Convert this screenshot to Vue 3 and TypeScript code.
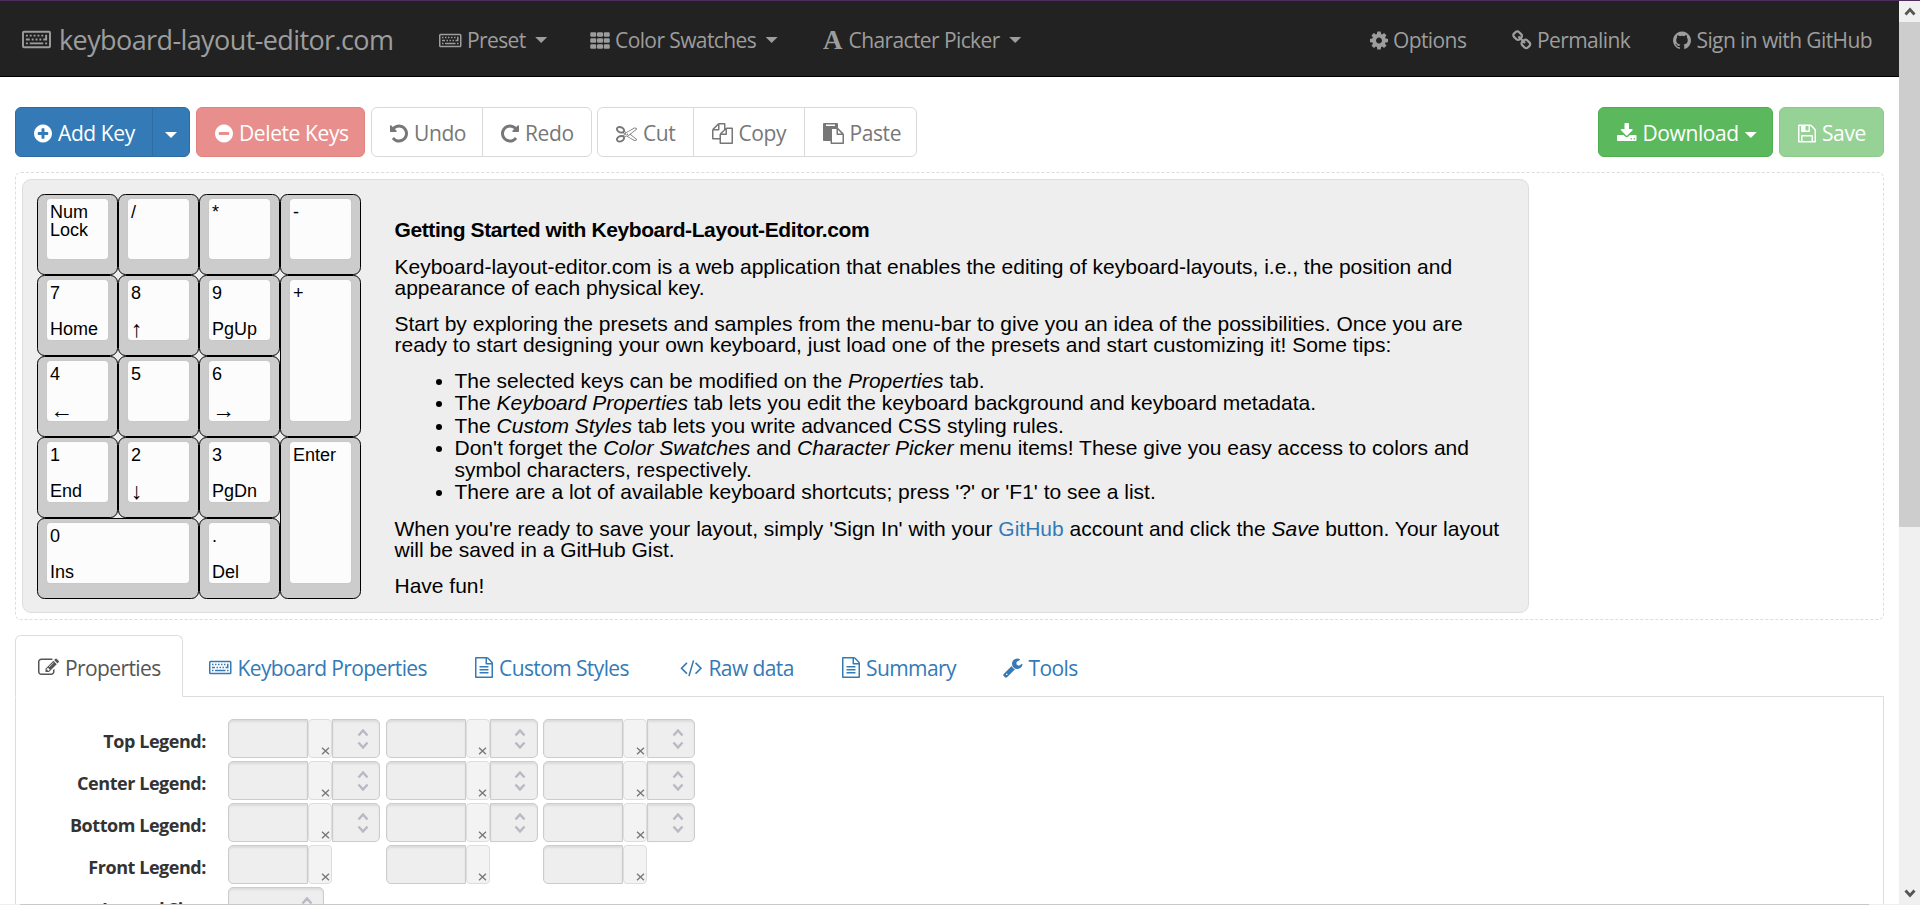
<script setup lang="ts">
import { defineComponent, h } from 'vue'

interface Glyph { box: string; w: number; d: string }

const disc = 'zm320-64q0 209-103 385.5t-279.5 279.5-385.5 103-385.5-103-279.5-279.5-103-385.5 103-385.5 279.5-279.5 385.5-103 385.5 103 279.5 279.5 103 385.5z'

const glyphs: Record<string, Glyph> = {
  plus: { box: '128 0 1536 1792', w: 18, d: 'M1344 960v-128q0-26-19-45t-45-19h-256v-256q0-26-19-45t-45-19h-128q-26 0-45 19t-19 45v256h-256q-26 0-45 19t-19 45v128q0 26 19 45t45 19h256v256q0 26 19 45t45 19h128q26 0 45-19t19-45v-256h256q26 0 45-19t19-45' + disc },
  minus: { box: '128 0 1536 1792', w: 18, d: 'M1344 960v-128q0-26-19-45t-45-19h-768q-26 0-45 19t-19 45v128q0 26 19 45t45 19h768q26 0 45-19t19-45' + disc },
  undo: { box: '128 0 1536 1792', w: 18, d: 'M1664 896q0 156-61 298t-164 245-245 164-298 61q-172 0-327-72.5t-264-204.5q-7-10-6.5-22.5t8.5-20.5l137-138q10-9 25-9 16 2 23 12 73 95 179 147t225 52q104 0 198.5-40.5t163.5-109.5 109.5-163.5 40.5-198.5-40.5-198.5-109.5-163.5-163.5-109.5-198.5-40.5q-98 0-188 35.5t-160 101.5l137 138q31 30 14 69-17 40-59 40h-448q-26 0-45-19t-19-45v-448q0-42 40-59 39-17 69 14l130 129q107-101 244.5-156.5t284.5-55.5q156 0 298 61t245 164 164 245 61 298z' },
  redo: { box: '128 0 1536 1792', w: 18, d: 'M1664 256v448q0 26-19 45t-45 19h-448q-42 0-59-40-17-39 14-69l138-138q-148-137-349-137-104 0-198.5 40.5t-163.5 109.5-109.5 163.5-40.5 198.5 40.5 198.5 109.5 163.5 163.5 109.5 198.5 40.5q119 0 225-52t179-147q7-10 23-12 15 0 25 9l137 138q9 8 9.5 20.5t-7.5 22.5q-109 132-264 204.5t-327 72.5q-156 0-298-61t-245-164-164-245-61-298 61-298 164-245 245-164 298-61q147 0 284.5 55.5t244.5 156.5l130-129q29-31 70-14 39 17 39 59z' },
  th: { box: '0 0 1664 1792', w: 20, d: 'M96 192h320q96 0 96 96v192q0 96-96 96h-320q-96 0-96-96v-192q0-96 96-96zM672 192h320q96 0 96 96v192q0 96-96 96h-320q-96 0-96-96v-192q0-96 96-96zM1248 192h320q96 0 96 96v192q0 96-96 96h-320q-96 0-96-96v-192q0-96 96-96zM96 704h320q96 0 96 96v192q0 96-96 96h-320q-96 0-96-96v-192q0-96 96-96zM672 704h320q96 0 96 96v192q0 96-96 96h-320q-96 0-96-96v-192q0-96 96-96zM1248 704h320q96 0 96 96v192q0 96-96 96h-320q-96 0-96-96v-192q0-96 96-96zM96 1216h320q96 0 96 96v192q0 96-96 96h-320q-96 0-96-96v-192q0-96 96-96zM672 1216h320q96 0 96 96v192q0 96-96 96h-320q-96 0-96-96v-192q0-96 96-96zM1248 1216h320q96 0 96 96v192q0 96-96 96h-320q-96 0-96-96v-192q0-96 96-96z' },
  cog: { box: '128 0 1536 1792', w: 18, d: 'M1152 896q0-106-75-181t-181-75-181 75-75 181 75 181 181 75 181-75 75-181zm512-109v222q0 12-8 23t-20 13l-185 28q-19 54-39 91 35 50 107 138 10 12 10 25t-9 23q-27 37-99 108t-94 71q-12 0-26-9l-138-108q-44 23-91 38-16 136-29 186-7 28-36 28h-222q-14 0-24.5-8.5t-11.5-21.5l-28-184q-49-16-90-37l-141 107q-10 9-25 9-14 0-25-11-126-114-165-168-7-10-7-23 0-12 8-23 15-21 51-66.5t54-70.5q-27-50-41-99l-183-27q-13-2-21-12.5t-8-23.5v-222q0-12 8-23t19-13l186-28q14-46 39-92-40-57-107-138-10-12-10-24 0-10 9-23 26-36 98.5-107.5t94.5-71.5q13 0 26 10l138 107q44-23 91-38 16-136 29-186 7-28 36-28h222q14 0 24.5 8.5t11.5 21.5l28 184q49 16 90 37l142-107q9-9 24-9 13 0 25 10 129 119 165 170 7 8 7 22 0 12-8 23-15 21-51 66.5t-54 70.5q26 50 41 98l183 28q13 2 21 12.5t8 23.5z' },
  link: { box: '64 0 1664 1792', w: 19.5, d: 'M1520 1216q0-40-28-68l-208-208q-28-28-68-28-42 0-72 32 3 3 19 18.5t21.5 21.5 15 19 13 25.5 3.5 27.5q0 40-28 68t-68 28q-15 0-27.5-3.5t-25.5-13-19-15-21.5-21.5-18.5-19q-33 31-33 73 0 40 28 68l206 207q27 27 68 27 40 0 68-26l147-146q28-28 28-67zm-703-705q0-40-28-68l-206-207q-28-28-68-28-39 0-68 27l-147 146q-28 28-28 67 0 40 28 68l208 208q27 27 68 27 42 0 72-31-3-3-19-18.5t-21.5-21.5-15-19-13-25.5-3.5-27.5q0-40 28-68t68-28q15 0 27.5 3.5t25.5 13 19 15 21.5 21.5 18.5 19q33-31 33-73zm895 705q0 120-85 203l-147 146q-83 83-203 83-121 0-204-85l-206-207q-83-83-83-203 0-123 88-209l-88-88q-86 88-208 88-120 0-204-84l-208-208q-84-84-84-204t85-203l147-146q83-83 203-83 121 0 204 85l206 207q83 83 83 203 0 123-88 209l88 88q86-88 208-88 120 0 204 84l208 208q84 84 84 204z' },
  github: { box: '128 0 1536 1792', w: 18, d: 'M896 128q209 0 385.5 103t279.5 279.5 103 385.5q0 251-146.5 451.5t-378.5 277.5q-27 5-40-7t-13-30q0-3 .5-76.5t.5-134.5q0-97-52-142 57-6 102.5-18t94-39 81-66.5 53-105 20.5-150.5q0-119-79-206 37-91-8-204-28-9-81 11t-92 44l-38 24q-93-26-192-26t-192 26q-16-11-42.5-27t-83.5-38.5-85-13.5q-45 113-8 204-79 87-79 206 0 85 20.5 150t52.5 105 80.5 67 94 39 102.5 18q-39 36-49 103-21 10-45 15t-57 5-65.5-21.5-55.5-62.5q-19-32-48.5-52t-49.5-24l-20-3q-21 0-29 4.5t-5 11.5 9 14 13 12l7 5q22 10 43.5 38t31.5 51l10 23q13 38 44 61.5t67 30 69.5 7 55.5-3.5l23-4q0 38 .5 88.5t.5 54.5q0 18-13 30t-40 7q-232-77-378.5-277.5t-146.5-451.5q0-209 103-385.5t279.5-279.5 385.5-103z' },
  wrench: { box: '64 0 1664 1792', w: 19.5, d: 'M448 1472q0-26-19-45t-45-19-45 19-19 45 19 45 45 19 45-19 19-45zm644-420l-682 682q-37 37-90 37-52 0-91-37l-106-108q-38-36-38-90 0-53 38-91l681-681q39 98 114.5 173.5t173.5 114.5zm634-435q0 39-23 106-47 134-164.5 217.5t-258.5 83.5q-185 0-316.5-131.5t-131.5-316.5 131.5-316.5 316.5-131.5q58 0 121.5 16.5t107.5 46.5q16 11 16 28t-16 28l-293 169v224l193 107q5-3 79-48.5t135.5-81 70.5-35.5q15 0 23.5 10t8.5 25z' },
  edit: { box: '0 0 1792 1792', w: 21, d: 'M888 1184l116-116-152-152-116 116v56h96v96h56zm440-720q-16-16-33 1l-350 350q-17 17-1 33t33-1l350-350q17-17 1-33zm80 594v190q0 119-84.5 203.5t-203.5 84.5h-832q-119 0-203.5-84.5t-84.5-203.5v-832q0-119 84.5-203.5t203.5-84.5h832q63 0 117 25 15 7 18 23 3 17-9 29l-49 49q-14 14-32 8-23-6-45-6h-832q-66 0-113 47t-47 113v832q0 66 47 113t113 47h832q66 0 113-47t47-113v-126q0-13 9-22l64-64q15-15 35-7t20 29zm-96-738l288 288-672 672h-288v-288zm444 132l-92 92-288-288 92-92q28-28 68-28t68 28l152 152q28 28 28 68t-28 68z' },
  file: { box: '128 0 1536 1792', w: 18, d: 'M1596 380q28 28 48 76t20 88v1152q0 40-28 68t-68 28h-1344q-40 0-68-28t-28-68v-1600q0-40 28-68t68-28h896q40 0 88 20t76 48zm-444-244v376h376q-10-29-22-41l-313-313q-12-12-41-22zm384 1528v-1024h-416q-40 0-68-28t-28-68v-416h-768v1536h1280zm-1024-864q0-14 9-23t23-9h704q14 0 23 9t9 23v64q0 14-9 23t-23 9h-704q-14 0-23-9t-9-23v-64zm736 224q14 0 23 9t9 23v64q0 14-9 23t-23 9h-704q-14 0-23-9t-9-23v-64q0-14 9-23t23-9h704zm0 256q14 0 23 9t9 23v64q0 14-9 23t-23 9h-704q-14 0-23-9t-9-23v-64q0-14 9-23t23-9h704z' },
  save: { box: '128 0 1536 1792', w: 18, d: 'M512 1536h768v-384h-768v384zm896 0h128v-896q0-14-10-38.5t-20-34.5l-281-281q-10-10-34-20t-39-10v416q0 40-28 68t-68 28h-576q-40 0-68-28t-28-68v-416h-128v1280h128v-416q0-40 28-68t68-28h832q40 0 68 28t28 68v416zm-384-928v-320q0-13-9.5-22.5t-22.5-9.5h-192q-13 0-22.5 9.5t-9.5 22.5v320q0 13 9.5 22.5t22.5 9.5h192q13 0 22.5-9.5t9.5-22.5zm640 32v928q0 40-28 68t-68 28h-1344q-40 0-68-28t-28-68v-1344q0-40 28-68t68-28h928q40 0 88 20t76 48l280 280q28 28 48 76t20 88z' },
  download: { box: '64 0 1664 1792', w: 19.5, d: 'M1344 1344q0-26-19-45t-45-19-45 19-19 45 19 45 45 19 45-19 19-45zm256 0q0-26-19-45t-45-19-45 19-19 45 19 45 45 19 45-19 19-45zm128-224v320q0 40-28 68t-68 28h-1472q-40 0-68-28t-28-68v-320q0-40 28-68t68-28h465l135 136q58 56 136 56t136-56l136-136h464q40 0 68 28t28 68zm-325-569q17 41-14 70l-448 448q-18 19-45 19t-45-19l-448-448q-31-29-14-70 17-39 59-39h256v-448q0-26 19-45t45-19h256q26 0 45 19t19 45v448h256q42 0 59 39z' },
  copy: { box: '0 0 1792 1792', w: 21, d: 'M1696 384q40 0 68 28t28 68v1216q0 40-28 68t-68 28h-960q-40 0-68-28t-28-68v-288h-544q-40 0-68-28t-28-68v-672q0-40 20-88t48-76l408-408q28-28 76-48t88-20h416q40 0 68 28t28 68v328q68-40 128-40h416zm-544 213l-299 299h299v-299zm-640-384l-299 299h299v-299zm196 647l316-316v-416h-384v416q0 40-28 68t-68 28h-416v640h512v-256q0-40 20-88t48-76zm956 804v-1152h-384v416q0 40-28 68t-68 28h-416v640h896z' },
  paste: { box: '0 0 1792 1792', w: 21, d: 'M768 1664h896v-640h-416q-40 0-68-28t-28-68v-416h-384v1152zm256-1440v-64q0-13-9.5-22.5t-22.5-9.5h-704q-13 0-22.5 9.5t-9.5 22.5v64q0 13 9.5 22.5t22.5 9.5h704q13 0 22.5-9.5t9.5-22.5zm256 672h299l-299-299v299zm512 128v672q0 40-28 68t-68 28h-960q-40 0-68-28t-28-68v-160h-544q-40 0-68-28t-28-68v-1344q0-40 28-68t68-28h1088q40 0 68 28t28 68v328q21 13 36 28l408 408q28 28 48 76t20 88z' },
  cut: { box: '0 0 1792 1792', w: 21, d: 'M960 896q26 0 45 19t19 45-19 45-45 19-45-19-19-45 19-45 45-19zm300 64l507 398q28 20 25 56-5 35-35 51l-128 64q-13 7-29 7-17 0-31-8l-690-387-110 66q-8 4-12 5 14 49 10 97-7 77-56 147.5t-132 123.5q-132 84-277 84-136 0-222-78-90-84-79-207 7-76 56-147t131-124q132-84 278-84 83 0 151 31 9-13 22-22l122-73-122-73q-13-9-22-22-68 31-151 31-146 0-278-84-82-53-131-124t-56-147q-5-59 15.5-113t63.5-93q85-79 222-79 145 0 277 84 83 52 132 123t56 148q4 48-10 97 4 1 12 5l110 66 690-387q14-8 31-8 16 0 29 7l128 64q30 16 35 51 3 36-25 56zm-681-260q46-42 21-108t-106-117q-92-59-192-59-74 0-113 36-46 42-21 108t106 117q92 59 192 59 74 0 113-36zm-85 745q81-51 106-117t-21-108q-39-36-113-36-100 0-192 59-81 51-106 117t21 108q39 36 113 36 100 0 192-59zm178-613l96 58v-11q0-36 33-56l14-8-79-44-26 26q-3 3-10 11t-12 12q-2 2-4 3.5t-3 2.5zm224 224l96 32 736-576-128-64-768 431v113l-160 96 9 8q2 2 7 6 4 4 11 12t11 12l26 26zm704 416l128-64-520-408-177 138q-2 3-13 7z' },
  code: { box: '64 0 1920 1792', w: 22.5, d: 'M681 1399l-50 50q-10 10-23 10t-23-10l-466-466q-10-10-10-23t10-23l466-466q10-10 23-10t23 10l50 50q10 10 10 23t-10 23l-393 393 393 393q10 10 10 23t-10 23zm591-1067l-373 1291q-4 13-15.5 19.5t-23.5 2.5l-62-17q-13-4-19.5-15.5t-2.5-24.5l373-1291q4-13 15.5-19.5t23.5-2.5l62 17q13 4 19.5 15.5t2.5 24.5zm657 651l-466 466q-10 10-23 10t-23-10l-50-50q-10-10-10-23t10-23l393-393-393-393q-10-10-10-23t10-23l50-50q10-10 23-10t23 10l466 466q10 10 10 23t-10 23z' },
  keyboard: { box: '0 -128 1920 1792', w: 22.5, d: 'M128 192h1664q128 0 128 128v896q0 128-128 128h-1664q-128 0-128-128v-896q0-128 128-128zM128 320v896h1664v-896zM256 960h128v128h-128zM512 960h896v128h-896zM1536 960h128v128h-128zM256 704h256v128h-256zM640 704h128v128h-128zM896 704h128v128h-128zM1152 704h128v128h-128zM256 448h128v128h-128zM512 448h128v128h-128zM768 448h128v128h-128zM1024 448h128v128h-128zM1280 448h128v128h-128zM1536 448h128v384h-256v-128h128z' },
}

const Icon = defineComponent({
  props: { name: { type: String, required: true } },
  setup(p) {
    return () => {
      const g = glyphs[p.name]
      return h('svg', { class: 'fa', viewBox: g.box, width: g.w, height: 21, preserveAspectRatio: 'xMidYMid meet', fill: 'currentColor', 'fill-rule': 'evenodd' }, [h('path', { d: g.d })])
    }
  },
})

interface Key { id: string; top: string; bottom?: string; arrow?: boolean }
const keys: Key[] = [
  { id: 'numlock', top: 'Num Lock' }, { id: 'div', top: '/' }, { id: 'mul', top: '*' }, { id: 'sub', top: '-' },
  { id: 'k7', top: '7', bottom: 'Home' }, { id: 'k8', top: '8', bottom: '↑', arrow: true }, { id: 'k9', top: '9', bottom: 'PgUp' }, { id: 'tall', top: '+' },
  { id: 'k4', top: '4', bottom: '←', arrow: true }, { id: 'k5', top: '5' }, { id: 'k6', top: '6', bottom: '→', arrow: true },
  { id: 'k1', top: '1', bottom: 'End' }, { id: 'k2', top: '2', bottom: '↓', arrow: true }, { id: 'k3', top: '3', bottom: 'PgDn' }, { id: 'tall', top: 'Enter' },
  { id: 'wide', top: '0', bottom: 'Ins' }, { id: 'dot', top: '.', bottom: 'Del' },
]

const tabs = [
  { icon: 'edit', label: 'Properties' },
  { icon: 'keyboard', label: 'Keyboard Properties' },
  { icon: 'file', label: 'Custom Styles' },
  { icon: 'code', label: 'Raw data' },
  { icon: 'file', label: 'Summary' },
  { icon: 'wrench', label: 'Tools' },
]

const rows = [
  { label: 'Top Legend:', sized: true },
  { label: 'Center Legend:', sized: true },
  { label: 'Bottom Legend:', sized: true },
  { label: 'Front Legend:', sized: false },
]
</script>

<template>
  <div class="window">
    <div class="page">
      <nav class="navbar">
        <a class="brand"><Icon name="keyboard" /><span>keyboard-layout-editor.com</span></a>
        <a class="link"><Icon name="keyboard" /><span>Preset</span><i class="caret" /></a>
        <a class="link"><Icon name="th" /><span>Color Swatches</span><i class="caret" /></a>
        <a class="link"><b class="serif-a">A</b><span>Character Picker</span><i class="caret" /></a>
        <a class="link"><Icon name="cog" /><span>Options</span></a>
        <a class="link"><Icon name="link" /><span>Permalink</span></a>
        <a class="link"><Icon name="github" /><span>Sign in with GitHub</span></a>
      </nav>

      <div class="toolbar">
        <div class="group add">
          <button class="btn primary"><Icon name="plus" /><span>Add Key</span></button>
          <button class="btn primary"><i class="caret" /></button>
        </div>
        <button class="btn danger"><Icon name="minus" /><span>Delete Keys</span></button>
        <div class="group history">
          <button class="btn plain"><Icon name="undo" /><span>Undo</span></button>
          <button class="btn plain"><Icon name="redo" /><span>Redo</span></button>
        </div>
        <div class="group clip">
          <button class="btn plain"><Icon name="cut" /><span>Cut</span></button>
          <button class="btn plain"><Icon name="copy" /><span>Copy</span></button>
          <button class="btn plain"><Icon name="paste" /><span>Paste</span></button>
        </div>
        <button class="btn success download"><Icon name="download" /><span>Download</span><i class="caret" /></button>
        <button class="btn success save"><Icon name="save" /><span>Save</span></button>
      </div>

      <div class="canvas">
        <div class="board">
          <div class="keys">
            <div v-for="(k, i) in keys" :key="i" class="key" :class="k.id">
              <div class="cap"><span>{{ k.top }}</span><span v-if="k.bottom" class="low" :class="{ arrowkey: k.arrow }">{{ k.bottom }}</span></div>
            </div>
          </div>
          <div class="intro">
            <h4>Getting Started with Keyboard-Layout-Editor.com</h4>
            <p>Keyboard-layout-editor.com is a web application that enables the editing of keyboard-layouts, i.e., the position and<br>appearance of each physical key.</p>
            <p>Start by exploring the presets and samples from the menu-bar to give you an idea of the possibilities. Once you are<br>ready to start designing your own keyboard, just load one of the presets and start customizing it! Some tips:</p>
            <ul>
              <li>The selected keys can be modified on the <i>Properties</i> tab.</li>
              <li>The <i>Keyboard Properties</i> tab lets you edit the keyboard background and keyboard metadata.</li>
              <li>The <i>Custom Styles</i> tab lets you write advanced CSS styling rules.</li>
              <li>Don't forget the <i>Color Swatches</i> and <i>Character Picker</i> menu items! These give you easy access to colors and<br>symbol characters, respectively.</li>
              <li>There are a lot of available keyboard shortcuts; press '?' or 'F1' to see a list.</li>
            </ul>
            <p>When you're ready to save your layout, simply 'Sign In' with your <a>GitHub</a> account and click the <i>Save</i> button. Your layout<br>will be saved in a GitHub Gist.</p>
            <p>Have fun!</p>
          </div>
        </div>
      </div>

      <div class="tabs">
        <a v-for="(t, i) in tabs" :key="t.label" class="tab" :class="{ active: i === 0 }"><Icon :name="t.icon" /><span>{{ t.label }}</span></a>
      </div>
      <div class="panel">
        <div v-for="r in rows" :key="r.label" class="row">
          <label>{{ r.label }}</label>
          <div v-for="n in 3" :key="n" class="cell">
            <div class="field" />
            <div class="clear"><svg width="9" height="8" viewBox="0 0 9 8"><path d="M1 .7l7 6.6M8 .7l-7 6.6" /></svg></div>
            <div v-if="r.sized" class="field number"><svg width="12" height="20" viewBox="0 0 12 20"><path d="M1.5 6.5l4.5-5 4.5 5M1.5 13.5l4.5 5 4.5-5" /></svg></div>
          </div>
        </div>
        <div class="row">
          <label>Legend Size:</label>
          <div class="field number alone"><svg width="12" height="20" viewBox="0 0 12 20"><path d="M1.5 6.5l4.5-5 4.5 5M1.5 13.5l4.5 5 4.5-5" /></svg></div>
        </div>
      </div>
    </div>
    <div class="scrollbar">
      <svg class="arrow" viewBox="0 0 12 9"><path d="M1.5 7.5l4.5-5 4.5 5" /></svg>
      <div class="thumb" />
      <svg class="arrow" viewBox="0 0 12 9"><path d="M1.5 1.5l4.5 5 4.5-5" /></svg>
    </div>
    <div class="edge" />
  </div>
</template>

<style>
html, body { overflow: hidden; background: #fff; }
</style>

<style scoped>
.window { position: relative; box-sizing: border-box; display: flex; width: 1920px; height: 905px; overflow: hidden; border-top: 1px solid #4b2d5f; font-family: "Open Sans", "Noto Sans", sans-serif; font-size: 21px; font-stretch: 92%; letter-spacing: -0.6px; color: #333; }
.window * { box-sizing: border-box; }
.page { width: 1899px; overflow: hidden; }
.page span { white-space: nowrap; }
:deep(.fa) { flex: none; display: block; }

.navbar { display: grid; grid-template-columns: 417px 150.5px 233.5px 546.5px 142.5px 161px 1fr; height: 76px; padding: 3px 0 0 22px; background: #222; border-bottom: 1px solid #000; color: #9d9d9d; }
.link, .brand { display: flex; align-items: center; gap: 5.5px; }
.brand { font-size: 27px; gap: 8px; padding-bottom: 1px; }
.brand :deep(.fa) { width: 29px; height: 27px; }
.link .caret { margin: 0 0 0 4px; }
.serif-a { width: 20px; font: 700 27px/20px "Liberation Serif", serif; }
.caret { flex: none; width: 12px; height: 6px; background: currentColor; clip-path: polygon(0 0, 100% 0, 50% 100%); }

.toolbar { display: flex; gap: 6px; height: 50px; margin: 30px 15px 0; }
.group { display: grid; }
.add { grid-template-columns: 138px 37px; }
.history { grid-template-columns: 112px 109px; }
.clip { grid-template-columns: 96.5px 111px 112.5px; margin-left: -1px; }
.btn { display: flex; align-items: center; gap: 6px; margin: 0; padding: 2px 0 0 18px; border: 1px solid; border-radius: 6px; font: inherit; font-stretch: inherit; letter-spacing: -0.4px; color: #fff; }
.btn .caret { margin-top: 4px; }
.primary { background: #337ab7; border-color: #2e6da4; }
.add .caret { margin-left: -6px; }
.group .btn:not(:last-child) { border-top-right-radius: 0; border-bottom-right-radius: 0; }
.group .btn:not(:first-child) { border-top-left-radius: 0; border-bottom-left-radius: 0; margin-left: -1px; }
.danger { width: 169px; background: #e88f8d; border-color: #e2827f; }
.plain { background: #fff; border-color: #d9d9d9; color: #777; }
.success { background: #5cb85c; border-color: #4cae4c; }
.download { width: 175px; margin-left: auto; }
.save { width: 105px; background: #96d196; border-color: #8bca8b; }

.canvas { height: 448px; margin: 15px 15px 0; padding: 6px; border: 1px dashed #ddd; border-radius: 6px; }
.board { display: flex; width: 1507px; height: 434px; padding: 14px; background: #eee; border: 1px solid #ddd; border-radius: 9px; font-family: "Liberation Sans", Arial, sans-serif; font-stretch: normal; letter-spacing: 0; color: #000; }
.keys { display: grid; grid-template: repeat(5, 81px) / repeat(4, 81px); flex: none; font-size: 18px; line-height: 18px; }
.key { padding: 3px 8px 14px; background: #ccc; border: 1px solid #000; border-radius: 7.5px; }
.tall { grid-row: span 2; }
.wide { grid-column: span 2; }
.cap { display: flex; flex-direction: column; height: 100%; padding: 4px 3px 2px; background: #fcfcfc; border: 1px solid rgba(0, 0, 0, 0.2); border-radius: 4.5px; }
.cap span { white-space: normal; }
.cap .low { margin-top: auto; }
.cap .arrowkey { font-size: 23px; }
.intro { margin-left: 33.5px; padding-top: 25px; line-height: 21px; white-space: nowrap; }
h4 { margin: 0 0 16px; font-size: 21px; font-weight: 700; line-height: 21px; letter-spacing: -0.4px; }
.intro p { margin: 0 0 15px; }
.intro ul { margin: 0 0 14px; padding-left: 60px; line-height: 22.3px; }
.intro a { color: #337ab7; }

.tabs { display: grid; grid-template-columns: 171px 266px 205px 162px 161px auto; height: 61px; margin: 15px 15px 0; color: #337ab7; }
.tab { display: flex; align-items: center; gap: 6px; padding: 3px 0 0 22px; border: 1px solid transparent; }
.active { z-index: 1; width: 168px; height: 62px; background: #fff; border-color: #ddd #ddd #fff; border-radius: 6px 6px 0 0; color: #555; }
.panel { height: 300px; margin: 0 15px; padding-top: 22px; border: 1px solid #ddd; }
.row { display: flex; height: 42px; }
.row label { width: 190px; margin-right: 22px; padding-top: 10px; font-size: 18px; font-weight: 700; line-height: 24px; letter-spacing: -0.45px; text-align: right; }
.cell { display: flex; width: 157.5px; height: 39px; }
.field { width: 80px; height: 39px; background: #eee; border: 1px solid #ccc; border-radius: 5px 0 0 5px; box-shadow: inset 0 2px 2px rgba(0, 0, 0, 0.075); }
.clear { display: flex; align-items: flex-end; justify-content: flex-end; width: 24px; padding: 0 1.5px 2px 0; background: #f3f3f3; border: 1px solid #ddd; border-radius: 4px; }
.clear path { fill: none; stroke: #777; stroke-width: 1.3; }
.number { display: flex; align-items: center; justify-content: flex-end; width: 48px; padding-right: 10.5px; border-radius: 0 5px 5px 0; }
.number path { fill: none; stroke: #b9b9c3; stroke-width: 2.4; }
.alone { width: 96px; border-radius: 5px; }

.scrollbar { display: flex; flex-direction: column; align-items: center; width: 21px; height: 903px; background: #f0f0f0; }
.arrow { width: 12px; height: 9px; margin: 6px 0; flex: none; }
.arrow path { fill: none; stroke: #555; stroke-width: 2.8; }
.thumb { width: 21px; height: 505px; margin-bottom: auto; background: #cdcdcd; }
.edge { position: absolute; left: 0; right: 0; bottom: 0; height: 1px; background: linear-gradient(90deg, #eee 20px, #c8c8c8 20px, #c8c8c8 1869px, #eee 1869px); }
</style>
